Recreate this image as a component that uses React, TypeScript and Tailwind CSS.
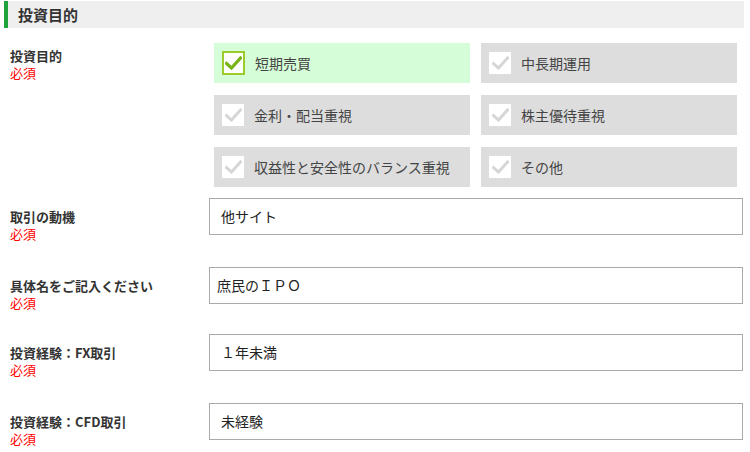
const font = { fontFamily: '"Noto Sans CJK JP", "Noto Sans", sans-serif' };

const options = [
	{ label: '短期売買', checked: true },
	{ label: '中長期運用', checked: false },
	{ label: '金利・配当重視', checked: false },
	{ label: '株主優待重視', checked: false },
	{ label: '収益性と安全性のバランス重視', checked: false },
	{ label: 'その他', checked: false },
];

const fields = [
	{ label: '取引の動機', value: '他サイト', mt: 'mt-[11px]', pad: 'pl-[11px]' },
	{ label: '具体名をご記入ください', value: '庶民のＩＰＯ', mt: 'mt-[32px]', pad: 'pl-[7px]' },
	{ label: '投資経験：FX取引', value: '１年未満', mt: 'mt-[30px]', pad: 'pl-[11px]' },
	{ label: '投資経験：CFD取引', value: '未経験', mt: 'mt-[32px]', pad: 'pl-[11px]' },
];

function Check({ checked }: { checked: boolean }) {
	if (checked) {
		return (
			<span className="flex h-[24px] w-[23px] shrink-0 items-center justify-center border-2 border-[#9ccc2c] bg-white">
				<svg width="17" height="14" viewBox="0 0 17 14">
					<path d="M1.5 7.5 L6.5 12 L15.5 2" fill="none" stroke="#78b417" strokeWidth="3.2" strokeLinecap="square" />
				</svg>
			</span>
		);
	}
	return (
		<span className="flex h-[22px] w-[22px] shrink-0 items-center justify-center bg-white">
			<svg width="17" height="14" viewBox="0 0 17 14">
				<path d="M1.5 7.5 L6.5 12 L15.5 2" fill="none" stroke="#d6d6d6" strokeWidth="3" strokeLinecap="square" />
			</svg>
		</span>
	);
}

function Label({ text }: { text: string }) {
	return (
		<div className="w-[209px] shrink-0 pl-[10px] text-[13px] leading-[17px]">
			<div className="font-bold text-[#333333]">{text}</div>
			<div className="text-[#ff0000]">必須</div>
		</div>
	);
}

export default function App() {
	return (
		<div className="h-[452px] w-[750px] overflow-hidden bg-white pt-px" style={font}>
			<div className="ml-[4px] flex h-[27px] w-[740px] items-center border-l-4 border-[#1ea23c] bg-[#efefef] pl-[10px]">
				<h2 className="text-[15px] font-bold leading-none text-[#333333]">投資目的</h2>
			</div>

			<div className="mt-[15px] flex">
				<div className="pt-[4px]">
					<Label text="投資目的" />
				</div>
				<div className="grid w-[533px] grid-cols-2 gap-x-[11px] gap-y-[12px] px-[5px]">
					{options.map((o) => (
						<div
							key={o.label}
							className={`flex h-[40px] items-center gap-[10px] pl-[8px] text-[14px] text-[#444444] ${o.checked ? 'bg-[#d4fdd8]' : 'bg-[#dddddd]'}`}
						>
							<Check checked={o.checked} />
							<span>{o.label}</span>
						</div>
					))}
				</div>
			</div>

			{fields.map((f) => (
				<div key={f.label} className={`flex h-[37px] items-start ${f.mt}`}>
					<div className="pt-[10px]">
						<Label text={f.label} />
					</div>
					<div className={`flex h-[37px] w-[534px] items-center border border-[#aaaaaa] bg-white ${f.pad} text-[14px] text-[#222222]`}>
						{f.value}
					</div>
				</div>
			))}
		</div>
	);
}
